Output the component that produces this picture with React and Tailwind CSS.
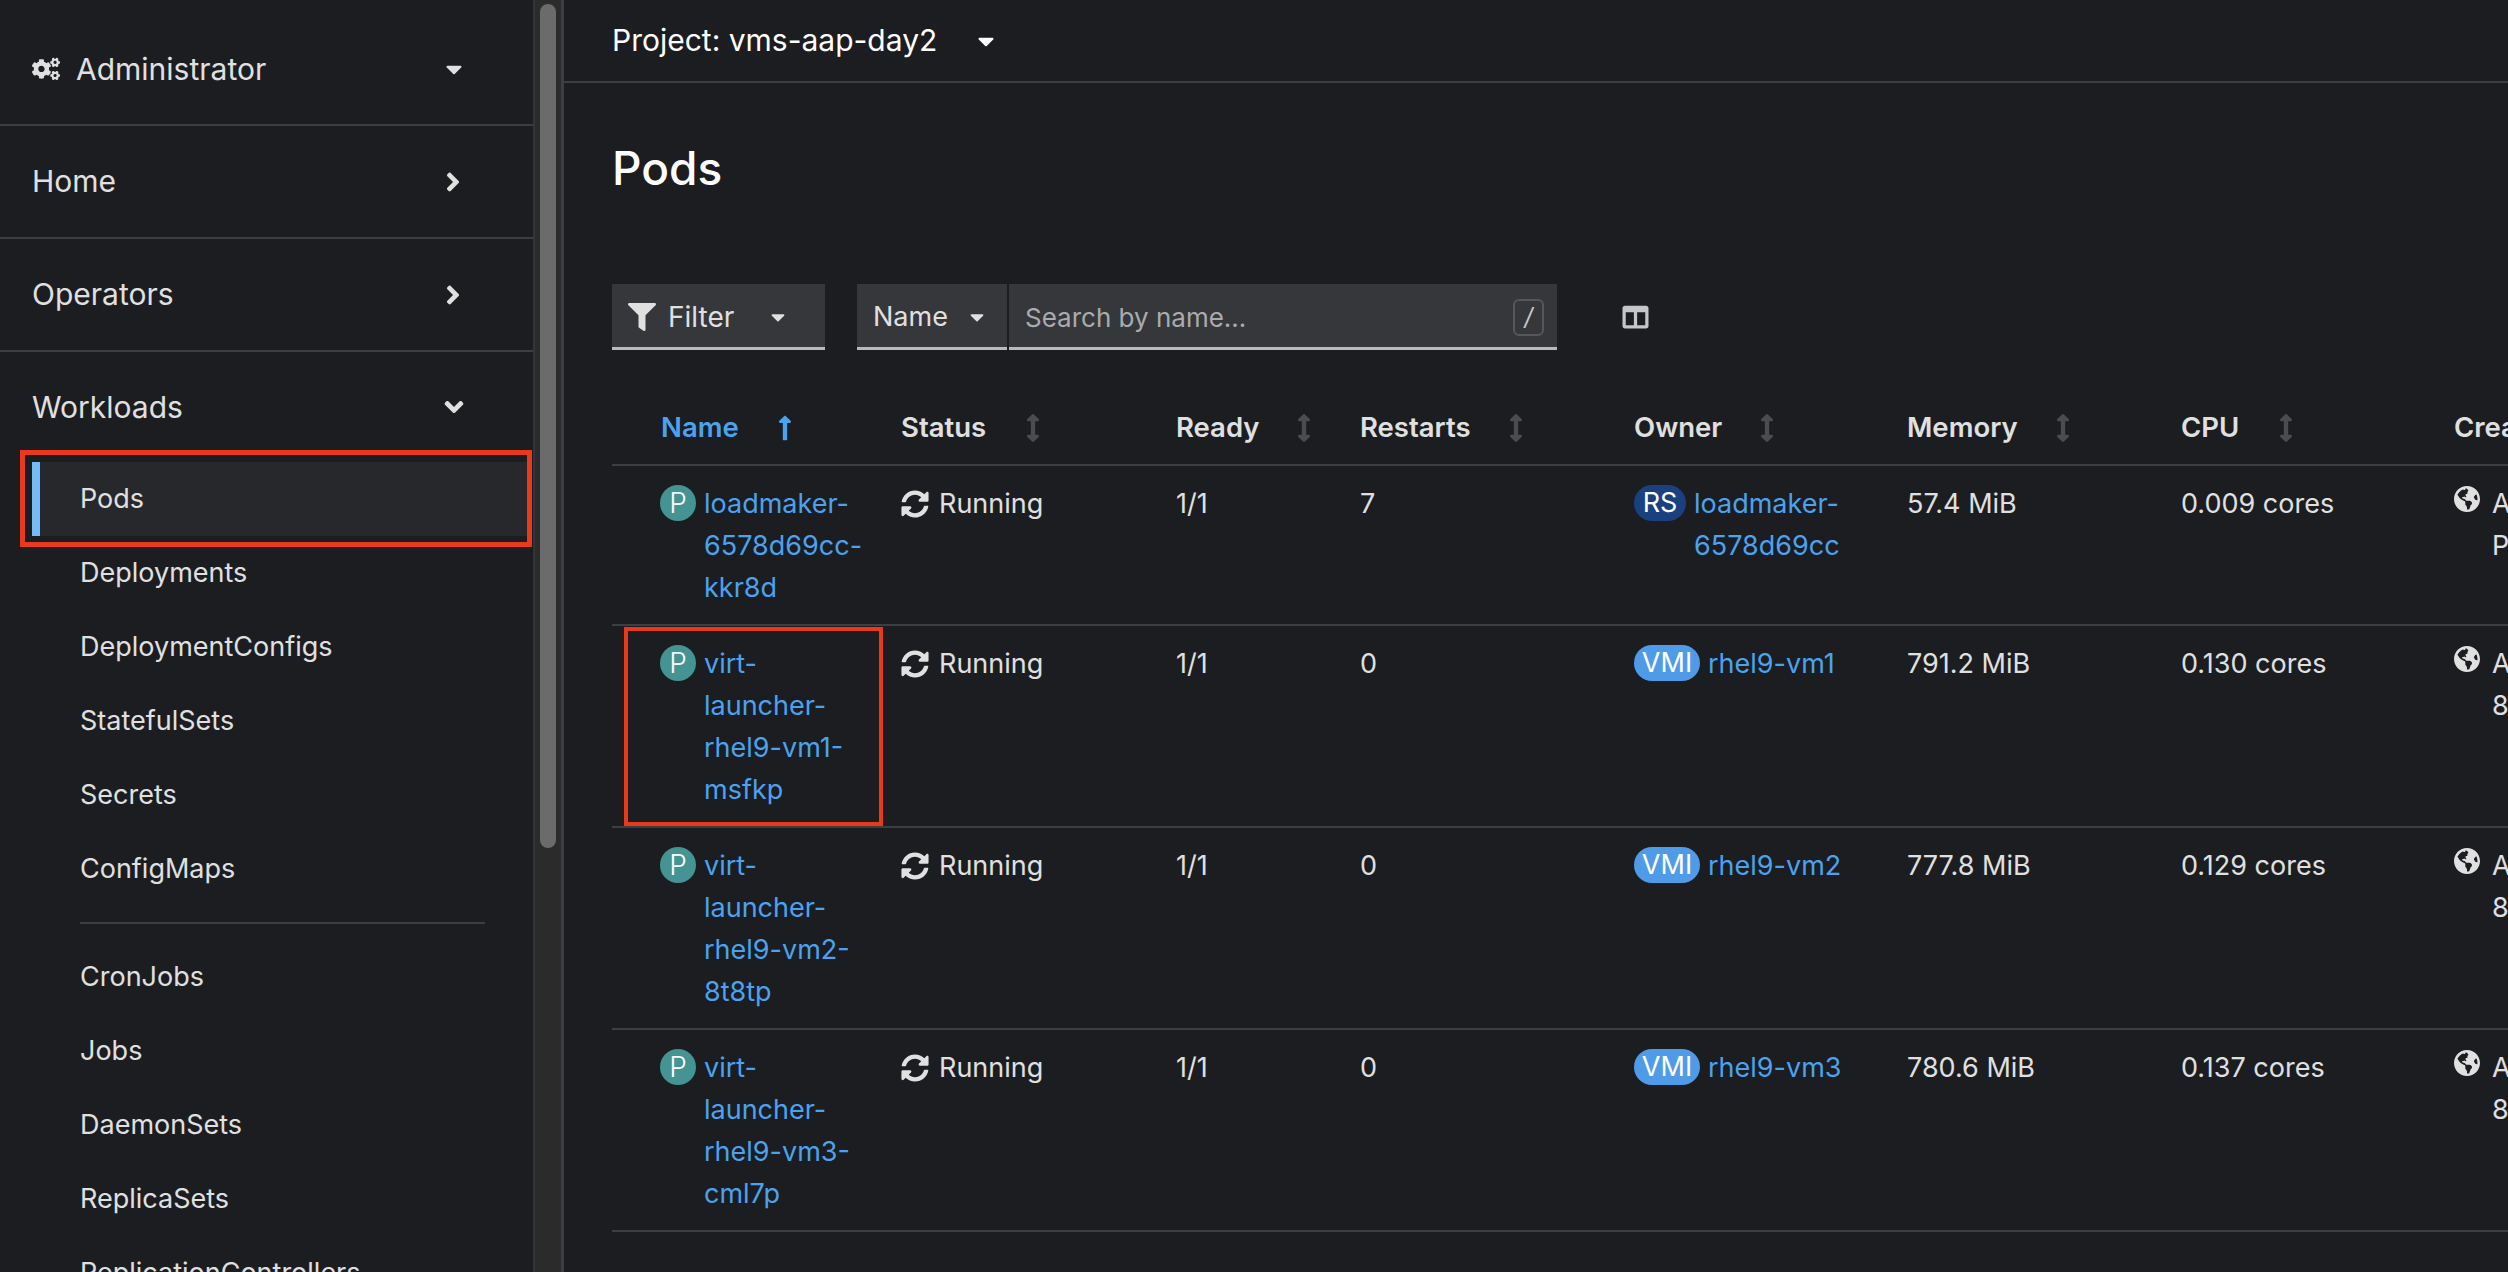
import {
  FaCogs, FaAngleRight, FaAngleDown, FaCaretDown, FaFilter, FaColumns,
  FaLongArrowAltUp, FaArrowsAltV, FaSyncAlt, FaGlobeAmericas,
} from 'react-icons/fa'

const font = 'font-["Inter","Noto_Sans",sans-serif]'

const group1 = ['Deployments', 'DeploymentConfigs', 'StatefulSets', 'Secrets', 'ConfigMaps']
const group2 = ['CronJobs', 'Jobs', 'DaemonSets', 'ReplicaSets', 'ReplicationControllers']

const columns = [
  { label: 'Name', w: 'w-[240px]', gap: 'ml-[38px]', active: true },
  { label: 'Status', w: 'w-[275px]', gap: 'ml-[40px]' },
  { label: 'Ready', w: 'w-[184px]', gap: 'ml-[38px]' },
  { label: 'Restarts', w: 'w-[274px]', gap: 'ml-[38px]' },
  { label: 'Owner', w: 'w-[273px]', gap: 'ml-[38px]' },
  { label: 'Memory', w: 'w-[274px]', gap: 'ml-[38px]' },
  { label: 'CPU', w: 'w-[273px]', gap: 'ml-[40px]' },
]

const pods = [
  {
    name: ['loadmaker-', '6578d69cc-', 'kkr8d'], restarts: '7', kind: 'RS',
    owner: ['loadmaker-', '6578d69cc'], memory: '57.4 MiB', cpu: '0.009 cores',
    created: ['Aug 12, 2025,', 'PM'],
  },
  {
    name: ['virt-', 'launcher-', 'rhel9-vm1-', 'msfkp'], restarts: '0', kind: 'VMI',
    owner: ['rhel9-vm1'], memory: '791.2 MiB', cpu: '0.130 cores',
    created: ['Aug 12, 2025,', '8:14 PM'], boxed: true,
  },
  {
    name: ['virt-', 'launcher-', 'rhel9-vm2-', '8t8tp'], restarts: '0', kind: 'VMI',
    owner: ['rhel9-vm2'], memory: '777.8 MiB', cpu: '0.129 cores',
    created: ['Aug 12, 2025,', '8:14 PM'],
  },
  {
    name: ['virt-', 'launcher-', 'rhel9-vm3-', 'cml7p'], restarts: '0', kind: 'VMI',
    owner: ['rhel9-vm3'], memory: '780.6 MiB', cpu: '0.137 cores',
    created: ['Aug 12, 2025,', '8:14 PM'],
  },
]

function NavSection({ label, icon, h, chevron }) {
  return (
    <div className={`flex shrink-0 items-center justify-between pl-[32px] pr-[70px] text-[30px] text-[#e0e0e0] ${h}`}>
      <span className="flex items-center">
        {icon}
        {label}
      </span>
      {chevron}
    </div>
  )
}

function SubItem({ label }) {
  return (
    <div className="flex h-[74px] shrink-0 items-center pl-[80px] pt-[1px] text-[27px] text-[#e0e0e0] whitespace-nowrap">{label}</div>
  )
}

function Sidebar() {
  return (
    <div className="flex w-[533px] shrink-0 flex-col overflow-hidden">
      <NavSection
        h="h-[126px] pt-[14px] border-b-2 border-[#3c3f42]"
        label="Administrator"
        icon={<FaCogs className="mr-[16px] h-[26px] w-[28px] text-[#e0e0e0]" />}
        chevron={<FaCaretDown className="-mr-[1px] h-[26px] w-[20px]" />}
      />
      <NavSection
        h="h-[113px] border-b-2 border-[#3c3f42]"
        label="Home"
        chevron={<FaAngleRight className="h-[30px] w-[20px]" />}
      />
      <NavSection
        h="h-[113px] border-b-2 border-[#3c3f42]"
        label="Operators"
        chevron={<FaAngleRight className="h-[30px] w-[20px]" />}
      />
      <NavSection
        h="h-[110px]"
        label="Workloads"
        chevron={<FaAngleDown className="-mr-[3px] h-[30px] w-[24px]" />}
      />
      <div className="relative ml-[32px] mr-[6px] flex h-[74px] shrink-0 items-center border-l-[8px] border-[#73bcf7] bg-[#26282c] pl-[40px] pt-[1px] text-[27px] text-[#e0e0e0]">
        Pods
        <div className="absolute -left-[20px] -right-[5px] -top-[12px] -bottom-[11px] border-[5px] border-[#e8391c]" />
      </div>
      {group1.map(l => <SubItem key={l} label={l} />)}
      <div className="ml-[80px] mr-[48px] mb-[16px] mt-[16px] h-[2px] shrink-0 bg-[#3c3f42]" />
      {group2.map(l => <SubItem key={l} label={l} />)}
    </div>
  )
}

function Scrollbar() {
  return (
    <div className="flex w-[31px] shrink-0 justify-center border-l-2 border-r-[3px] border-l-[#333539] border-r-[#3c3f42] bg-[#2b2b2b] pt-[4px]">
      <div className="h-[844px] w-[16px] rounded-full bg-[#6b6b6b]" />
    </div>
  )
}

function Toolbar() {
  return (
    <div className="mt-[84px] flex items-center pl-[48px]">
      <div className="flex h-[66px] w-[213px] items-center border-b-[3px] border-[#b8bbbe] bg-[#36373b] pl-[16px] pt-[3px] text-[28px] text-[#e0e0e0]">
        <FaFilter className="h-[28px] w-[28px]" />
        <span className="ml-[12px]">Filter</span>
        <FaCaretDown className="ml-[35px] h-[22px] w-[18px]" />
      </div>
      <div className="ml-[32px] flex h-[66px] w-[150px] items-center border-b-[3px] border-[#b8bbbe] bg-[#36373b] pl-[16px] pt-[3px] text-[27px] text-[#e0e0e0]">
        Name
        <FaCaretDown className="ml-[20px] h-[22px] w-[18px]" />
      </div>
      <div className="ml-[2px] flex h-[66px] w-[548px] items-center justify-between border-b-[3px] border-[#b8bbbe] bg-[#36373b] pl-[16px] pr-[13px] pt-[3px] text-[26px] text-[#a9abae]">
        <span>Search by name...</span>
        <span className="flex h-[37px] w-[31px] items-center justify-center rounded-[6px] border-2 border-[#55575b] text-[24px] italic text-[#c8c9cb]">/</span>
      </div>
      <FaColumns className="ml-[64px] h-[26px] w-[29px] text-[#c4c6c8]" />
    </div>
  )
}

function HeaderRow() {
  return (
    <div className="mt-[45px] ml-[48px] flex h-[71px] items-center border-b-2 border-[#3c3f42] pl-[49px] pb-[4px] text-[27.5px] font-semibold text-[#e0e0e0]">
      {columns.map(c => (
        <div key={c.label} className={`flex shrink-0 items-center ${c.w}`}>
          <span className={c.active ? 'text-[#4ba3f0]' : ''}>{c.label}</span>
          {c.active
            ? <FaLongArrowAltUp className={`h-[28px] w-[16px] text-[#4ba3f0] ${c.gap}`} />
            : <FaArrowsAltV className={`h-[28px] w-[14px] text-[#4a4c50] ${c.gap}`} />}
        </div>
      ))}
      <div className="shrink-0">Created</div>
    </div>
  )
}

function Lines({ lines }) {
  return (
    <div className="text-[#4ba3f0]">
      {lines.map(l => <div key={l}>{l}</div>)}
    </div>
  )
}

function PodRow({ pod }) {
  return (
    <div className="relative ml-[48px] flex border-b-2 border-[#3c3f42] pb-[15px] pl-[48px] pt-[17px] text-[27px] leading-[42px] text-[#e0e0e0]">
      <div className="flex w-[241px] shrink-0">
        <span className="mr-[8px] mt-[2px] flex h-[36px] w-[36px] shrink-0 items-center justify-center rounded-full bg-[#459494] text-[28px] font-light text-white">P</span>
        <Lines lines={pod.name} />
      </div>
      <div className="flex w-[275px] shrink-0 items-start">
        <FaSyncAlt className="mr-[10px] mt-[7px] h-[28px] w-[28px]" />
        Running
      </div>
      <div className="w-[184px] shrink-0">1/1</div>
      <div className="w-[274px] shrink-0">{pod.restarts}</div>
      <div className="flex w-[273px] shrink-0">
        <span className={`mr-[8px] mt-[2px] flex h-[36px] shrink-0 items-center justify-center rounded-full text-[27px] text-white ${pod.kind === 'RS' ? 'w-[52px] bg-[#1a4080]' : 'w-[66px] bg-[#4f9be8]'}`}>
          {pod.kind}
        </span>
        <Lines lines={pod.owner} />
      </div>
      <div className="w-[274px] shrink-0">{pod.memory}</div>
      <div className="w-[273px] shrink-0">{pod.cpu}</div>
      <div className="flex shrink-0 whitespace-nowrap">
        <FaGlobeAmericas className="mr-[12px] mt-[2px] h-[28px] w-[26px]" />
        <div>{pod.created.map(l => <div key={l}>{l}</div>)}</div>
      </div>
      {pod.boxed && (
        <div className="absolute left-[12px] top-[1px] h-[199px] w-[259px] border-[4px] border-[#e8391c]" />
      )}
    </div>
  )
}

export default function App() {
  return (
    <div className={`flex h-screen w-full overflow-hidden bg-[#1b1d21] ${font}`}>
      <Sidebar />
      <Scrollbar />
      <div className="min-w-0 flex-1 overflow-hidden">
        <div className="flex h-[83px] items-center border-b-2 border-[#3c3f42] pl-[48px] text-[30px] text-white">
          Project: vms-aap-day2
          <FaCaretDown className="ml-[39px] h-[26px] w-[20px]" />
        </div>
        <h1 className="mt-[53px] pl-[48px] text-[46px] font-medium leading-[64px] text-white">Pods</h1>
        <Toolbar />
        <HeaderRow />
        {pods.map(p => <PodRow key={p.name.join('')} pod={p} />)}
      </div>
    </div>
  )
}
